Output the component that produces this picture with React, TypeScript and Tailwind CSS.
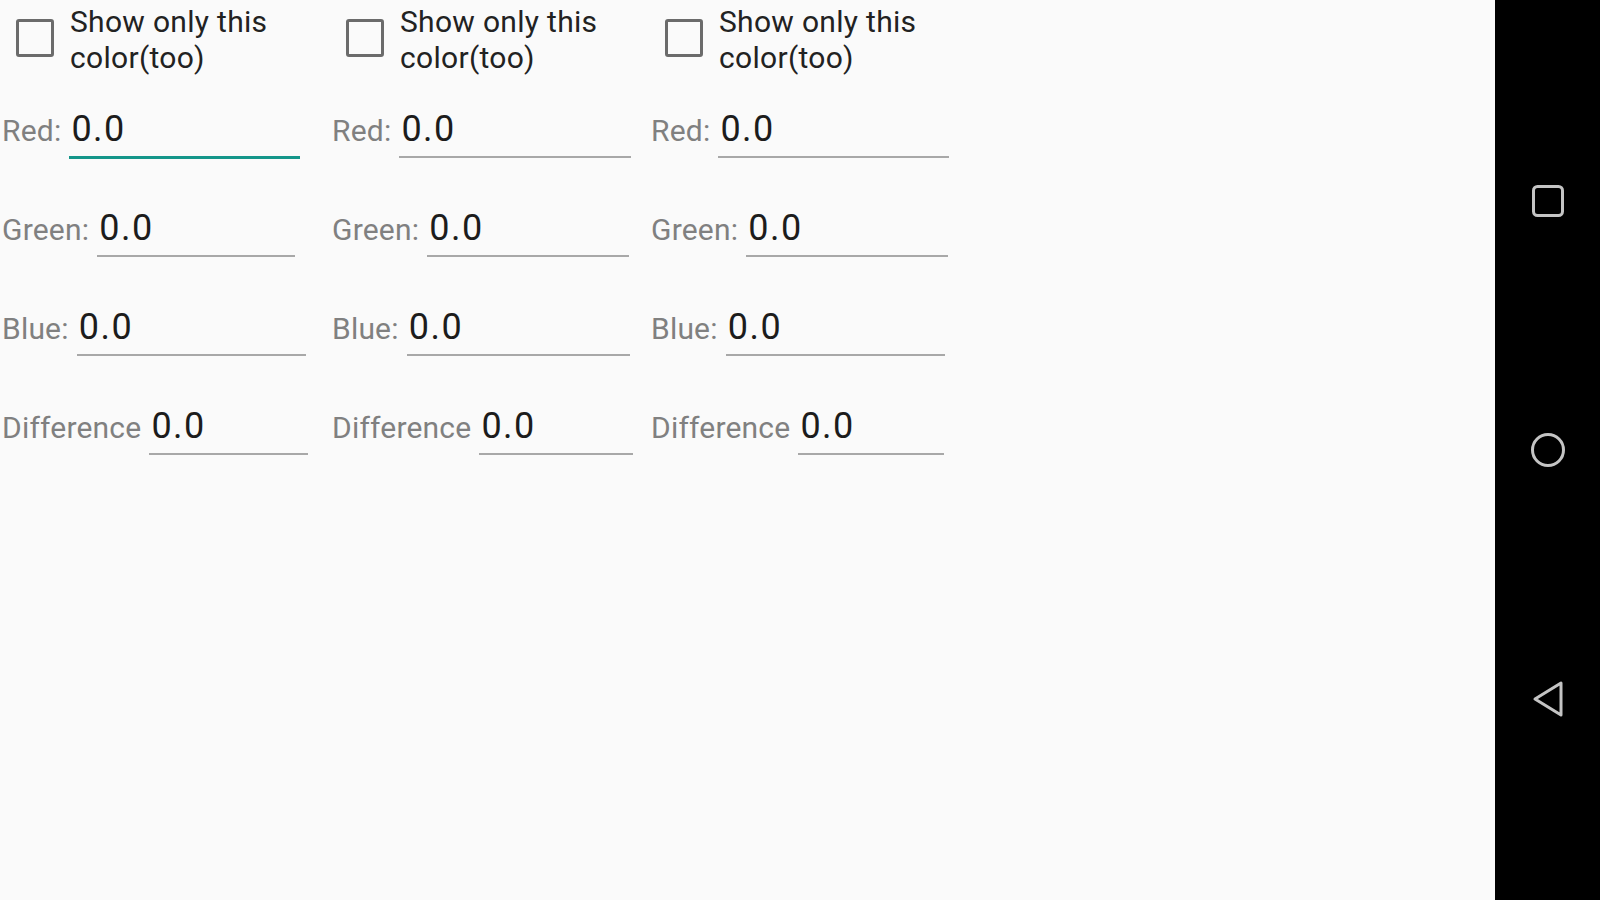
type Field = { label: string; width: number; focused?: boolean }

const columns: { width: string; fields: Field[] }[] = [
  {
    width: 'w-[330px]',
    fields: [
      { label: 'Red:', width: 231, focused: true },
      { label: 'Green:', width: 198 },
      { label: 'Blue:', width: 229 },
      { label: 'Difference', width: 159 },
    ],
  },
  {
    width: 'w-[319px]',
    fields: [
      { label: 'Red:', width: 232 },
      { label: 'Green:', width: 202 },
      { label: 'Blue:', width: 223 },
      { label: 'Difference', width: 154 },
    ],
  },
  {
    width: 'w-[320px]',
    fields: [
      { label: 'Red:', width: 231 },
      { label: 'Green:', width: 202 },
      { label: 'Blue:', width: 219 },
      { label: 'Difference', width: 146 },
    ],
  },
]

function ColorColumn({ width, fields }: { width: string; fields: Field[] }) {
  return (
    <div className={`${width} flex flex-col`}>
      {/* checkbox */}
      <div className="h-[109px] flex items-start">
        <div className="ml-[16px] mt-[19px] w-[38px] h-[38px] border-[3px] border-[#6b6b6b] rounded-[3px] shrink-0" />
        <div className="ml-[16px] mt-[4px] text-[30px] leading-[36px] tracking-[0.3px] text-[#222]">
          Show only this
          <br />
          color(too)
        </div>
      </div>

      {fields.map((f) => (
        <div key={f.label} className="h-[99px] flex items-baseline pl-[2px]">
          <span className="text-[30px] leading-[35px] tracking-[0.2px] text-[#808080]">{f.label}</span>
          <div
            className={`ml-[8px] pl-[2px] pb-[7px] text-[36px] leading-[40px] tracking-[1.5px] text-[#1c1c1c] ${
              f.focused ? 'border-b-[3px] border-[#14968a]' : 'border-b-[2px] border-[#a8a8a8]'
            }`}
            style={{ width: f.width }}
          >
            0.0
          </div>
        </div>
      ))}
    </div>
  )
}

export default function App() {
  return (
    <div
      className="w-[1600px] h-[900px] flex bg-[#fafafa] overflow-hidden"
      style={{ fontFamily: 'Roboto, "Noto Sans", sans-serif' }}
    >
      <div className="flex-1 flex">
        {columns.map((c, i) => (
          <ColorColumn key={i} width={c.width} fields={c.fields} />
        ))}
      </div>

      {/* nav bar */}
      <div className="w-[105px] h-full bg-black flex flex-col items-center pt-[171px] gap-[189px]">
        <svg width="60" height="60" viewBox="0 0 60 60" className="ml-[1px]">
          <rect x="15.5" y="15.5" width="29" height="29" rx="4" fill="none" stroke="#c4c4c4" strokeWidth="3" />
        </svg>
        <svg width="60" height="60" viewBox="0 0 60 60" className="ml-[1px]">
          <circle cx="30" cy="30" r="15.5" fill="none" stroke="#c4c4c4" strokeWidth="3" />
        </svg>
        <svg width="60" height="60" viewBox="0 0 60 60" className="ml-[1px]">
          <path d="M43 14 L43 46 L17 30 Z" fill="none" stroke="#c4c4c4" strokeWidth="3" strokeLinejoin="round" />
        </svg>
      </div>
    </div>
  )
}
